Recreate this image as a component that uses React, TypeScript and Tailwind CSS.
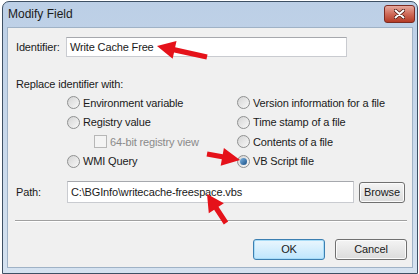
import React from "react";

function Arrow({ tip, tail, head = 18, hw = 9, sw = 2.6 }: { tip: [number, number]; tail: [number, number]; head?: number; hw?: number; sw?: number }) {
  const dx = tip[0] - tail[0];
  const dy = tip[1] - tail[1];
  const len = Math.hypot(dx, dy);
  const ux = dx / len;
  const uy = dy / len;
  const px = -uy;
  const py = ux;
  const bx = tip[0] - ux * head;
  const by = tip[1] - uy * head;
  const pts = [
    [tip[0], tip[1]],
    [bx + px * hw, by + py * hw],
    [bx + px * sw, by + py * sw],
    [tail[0] + px * sw, tail[1] + py * sw],
    [tail[0] - px * sw, tail[1] - py * sw],
    [bx - px * sw, by - py * sw],
    [bx - px * hw, by - py * hw],
  ];
  return <polygon points={pts.map((p) => p.join(",")).join(" ")} fill="#e5121a" />;
}

function Radio({ label, checked = false }: { label: string; checked?: boolean }) {
  return (
    <div className="flex items-center gap-[3px] h-[19.5px]">
      <span className="w-[13px] h-[13px] rounded-full border border-[#8f9090] bg-gradient-to-br from-[#d4d4d4] to-[#f8f8f8] flex items-center justify-center">
        {checked && <span className="w-[7px] h-[7px] rounded-full bg-gradient-to-br from-[#7fb6e3] to-[#154f86]" />}
      </span>
      <span>{label}</span>
    </div>
  );
}

function Button({ label, primary = false, w = "w-[72px]" }: { label: string; primary?: boolean; w?: string }) {
  return (
    <div
      className={`${w} h-[21px] rounded-[3px] border flex items-center justify-center ${
        primary
          ? "border-[#3c7fb1] bg-gradient-to-b from-[#eaf6fd] to-[#bee6fd] shadow-[inset_0_0_0_1px_#a8dcf7]"
          : "border-[#707070] bg-gradient-to-b from-[#f4f4f4] to-[#dcdcdc] shadow-[inset_0_0_0_1px_#fbfbfb]"
      }`}
    >
      {label}
    </div>
  );
}

export default function App() {
  return (
    <div className="relative w-[419px] h-[274px] bg-white overflow-hidden text-[11px] tracking-[-0.15px] text-[#1a1a1a]" style={{ fontFamily: '"Liberation Sans", Arial, sans-serif' }}>
      <div className="flex pl-[2px] pt-[1px] pr-[1px] h-full">
        <div className="flex-1 flex flex-col rounded-t-[7px] border border-[#3e5064] bg-gradient-to-b from-[#bccfe6] to-[#d5e2f0]">
          {/* Title bar */}
          <div className="h-[24px] flex items-center justify-between pl-[5px] pr-[2px]">
            <span className="text-[12px] tracking-normal text-[#1b1b1b]">Modify Field</span>
            <div className="w-[31px] h-[18px] rounded-[3px] border border-[#7b2b22] bg-gradient-to-b from-[#e6a99f] via-[#cf6a58] to-[#b43a24] flex items-center justify-center">
              <svg width="11" height="10" viewBox="0 0 11 10">
                <path d="M1.5 1.5 L9.5 8.5 M9.5 1.5 L1.5 8.5" stroke="#4a1810" strokeWidth="3.6" strokeLinecap="round" />
                <path d="M1.5 1.5 L9.5 8.5 M9.5 1.5 L1.5 8.5" stroke="#fff" strokeWidth="2" strokeLinecap="round" />
              </svg>
            </div>
          </div>

          {/* Client area */}
          <div className="flex-1 mx-[4px] mb-[5px] mt-[1px] border border-[#9fb2c6] bg-[#f0f0f0] flex flex-col">
            <div className="flex items-center mt-[9px] pl-[8px]">
              <span className="w-[50px]">Identifier:</span>
              <div className="w-[281px] h-[20px] bg-white border border-[#c9cbd0] border-t-[#a6a8ad] flex items-center px-[3px]">
                Write Cache Free
              </div>
            </div>

            <div className="mt-[21px] pl-[8px] leading-[13px]">Replace identifier with:</div>

            <div className="grid grid-cols-[170px_1fr] ml-[59px] mt-[2px]">
              <div className="flex flex-col">
                <Radio label="Environment variable" />
                <Radio label="Registry value" />
                <div className="flex items-center gap-[3px] h-[19.5px] pl-[27px] text-[#8a8a8a]">
                  <span className="w-[13px] h-[13px] border border-[#b7b7b7] bg-[#f4f4f4]" />
                  <span>64-bit registry view</span>
                </div>
                <Radio label="WMI Query" />
              </div>
              <div className="flex flex-col">
                <Radio label="Version information for a file" />
                <Radio label="Time stamp of a file" />
                <Radio label="Contents of a file" />
                <Radio label="VB Script file" checked />
              </div>
            </div>

            <div className="flex items-center mt-[10px] pl-[8px]">
              <span className="w-[51px]">Path:</span>
              <div className="w-[287px] h-[22px] bg-white border border-[#c9cbd0] border-t-[#a6a8ad] flex items-center px-[3px]">
                C:\BGInfo\writecache-freespace.vbs
              </div>
              <div className="ml-[5px]">
                <Button label="Browse" w="w-[46px]" />
              </div>
            </div>

            <div className="mt-[17px] ml-[7px] mr-[5px] border-t border-[#a0a0a0] border-b border-b-white" />

            <div className="flex justify-end gap-[10px] mt-[17px] pr-[5px]">
              <Button label="OK" primary />
              <Button label="Cancel" />
            </div>
          </div>
        </div>
      </div>

      <svg className="absolute inset-0 pointer-events-none" width="419" height="274">
        <Arrow tip={[157, 46]} tail={[207, 57]} />
        <Arrow tip={[240, 160]} tail={[207, 154]} />
        <Arrow tip={[207, 194]} tail={[226, 223]} head={17} />
      </svg>
    </div>
  );
}
